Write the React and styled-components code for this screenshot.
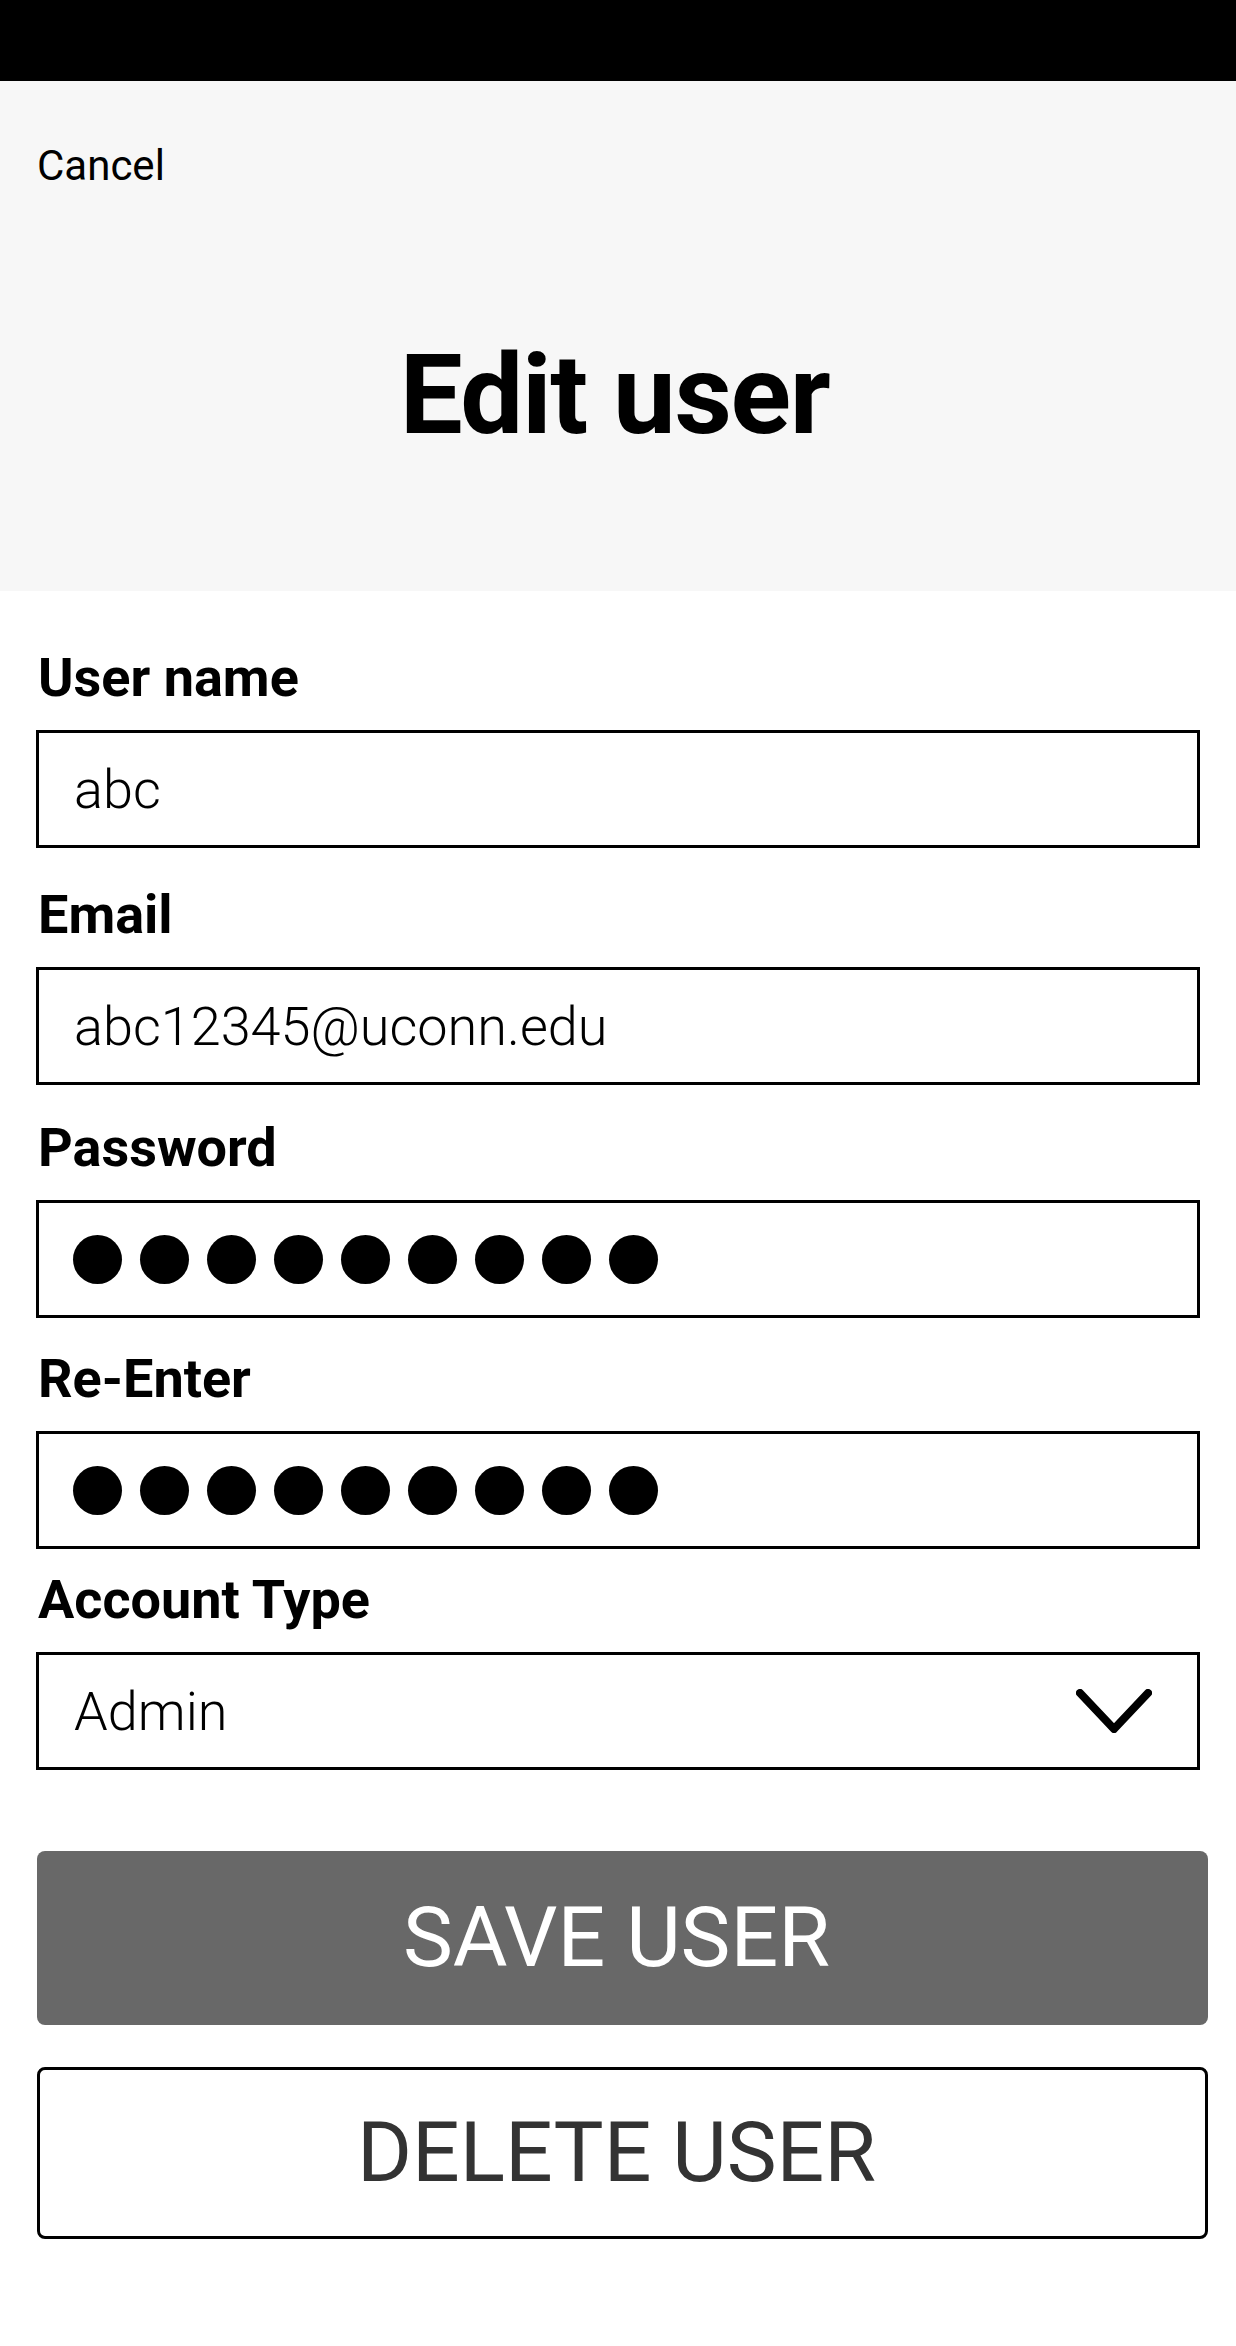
import React from 'react';
import styled, { createGlobalStyle } from 'styled-components';

const GlobalStyle = createGlobalStyle`
  html, body {
    margin: 0;
    padding: 0;
    background: #ffffff;
  }
  body {
    font-family: Roboto, "Liberation Sans", Arial, sans-serif;
    color: #000000;
  }
  * {
    box-sizing: border-box;
  }
`;

const Page = styled.div`
  width: 1236px;
  min-height: 2346px;
  display: flex;
  flex-direction: column;
  background: #ffffff;
`;

const StatusBar = styled.div`
  height: 81px;
  background: #000000;
  flex-shrink: 0;
`;

const Header = styled.header`
  height: 510px;
  background: #f7f7f7;
  padding: 60px 37px 0;
  display: flex;
  flex-direction: column;
`;

const CancelLink = styled.button`
  align-self: flex-start;
  border: none;
  background: none;
  padding: 0;
  font-family: inherit;
  font-size: 42px;
  font-weight: 400;
  line-height: 50px;
  color: #000000;
  cursor: pointer;
`;

const Title = styled.h1`
  margin: 148px 0 0;
  padding-right: 7px;
  font-size: 112px;
  font-weight: 700;
  line-height: 112px;
  text-align: center;
  letter-spacing: -1.4px;
`;

const Form = styled.form`
  display: flex;
  flex-direction: column;
  padding: 0 36px;
`;

const Field = styled.div`
  display: flex;
  flex-direction: column;
  margin-top: ${(p) => p.$gap}px;
`;

const Label = styled.label`
  font-size: 54px;
  font-weight: 700;
  line-height: 60px;
  margin: 0 0 22px 2px;
`;

const TextInput = styled.input`
  width: 1164px;
  height: 118px;
  border: 3px solid #000000;
  border-radius: 0;
  padding: 0 35px;
  font-family: inherit;
  font-size: 54px;
  font-weight: 300;
  color: #000000;
  background: #ffffff;
  outline: none;
`;

const MaskBox = styled.div`
  width: 1164px;
  height: 118px;
  border: 3px solid #000000;
  padding: 0 34px;
  display: flex;
  align-items: center;
  gap: 18px;
`;

const Dot = styled.span`
  width: 49px;
  height: 49px;
  border-radius: 50%;
  background: #000000;
  flex-shrink: 0;
`;

const SelectBox = styled.div`
  width: 1164px;
  height: 118px;
  border: 3px solid #000000;
  padding: 0 45px 0 35px;
  display: flex;
  align-items: center;
  justify-content: space-between;
  font-size: 54px;
  font-weight: 300;
`;

const Chevron = styled.svg`
  width: 76px;
  height: 44px;
`;

const Button = styled.button`
  width: 1171px;
  margin-left: 1px;
  height: ${(p) => (p.$primary ? 174 : 172)}px;
  margin-top: ${(p) => (p.$primary ? 81 : 42)}px;
  border-radius: 8px;
  border: ${(p) => (p.$primary ? 'none' : '3px solid #000000')};
  background: ${(p) => (p.$primary ? '#686868' : '#ffffff')};
  color: ${(p) => (p.$primary ? '#ffffff' : '#333333')};
  font-family: inherit;
  font-size: 84px;
  font-weight: 400;
  line-height: 1;
  padding: 0 12px 0 0;
  cursor: pointer;
`;

function PasswordMask({ length }) {
  return (
    <MaskBox>
      {Array.from({ length }, (_, i) => (
        <Dot key={i} />
      ))}
    </MaskBox>
  );
}

export default function App() {
  return (
    <>
      <GlobalStyle />
      <Page>
        <StatusBar />
        <Header>
          <CancelLink type="button">Cancel</CancelLink>
          <Title>Edit user</Title>
        </Header>
        <Form onSubmit={(e) => e.preventDefault()}>
          <Field $gap={57}>
            <Label>User name</Label>
            <TextInput readOnly defaultValue="abc" />
          </Field>
          <Field $gap={37}>
            <Label>Email</Label>
            <TextInput readOnly defaultValue="abc12345@uconn.edu" />
          </Field>
          <Field $gap={33}>
            <Label>Password</Label>
            <PasswordMask length={9} />
          </Field>
          <Field $gap={31}>
            <Label>Re-Enter</Label>
            <PasswordMask length={9} />
          </Field>
          <Field $gap={21}>
            <Label>Account Type</Label>
            <SelectBox>
              <span>Admin</span>
              <Chevron viewBox="0 0 76 44" fill="none">
                <polyline
                  points="4,4 38,40 72,4"
                  stroke="#000000"
                  strokeWidth="8"
                  strokeLinecap="round"
                  strokeLinejoin="round"
                />
              </Chevron>
            </SelectBox>
          </Field>
          <Button type="submit" $primary>SAVE USER</Button>
          <Button type="button">DELETE USER</Button>
        </Form>
      </Page>
    </>
  );
}
